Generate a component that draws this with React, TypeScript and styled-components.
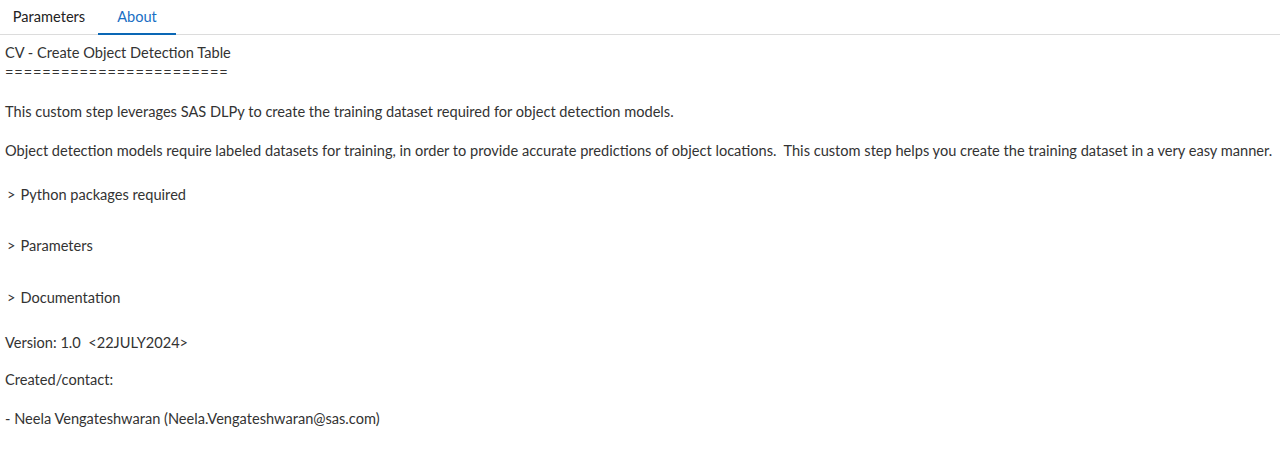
import React from "react";
import styled, { createGlobalStyle } from "styled-components";

const Global = createGlobalStyle`
  html, body { margin: 0; padding: 0; background: #fff; }
  body { font-family: Lato, "Open Sans", sans-serif; color: #333; }
`;

const Page = styled.div`
  width: 1280px;
  height: 460px;
  overflow: hidden;
`;

const TabBar = styled.div`
  display: flex;
  height: 34px;
  border-bottom: 1px solid #dcdcdc;
`;

const Tab = styled.div<{ $active?: boolean; $w: number }>`
  display: flex;
  align-items: center;
  justify-content: center;
  width: ${(p) => p.$w}px;
  padding-bottom: 3px;
  box-sizing: border-box;
  font-size: 14.6px;
  color: ${(p) => (p.$active ? "#1a6fc4" : "#222")};
  box-shadow: ${(p) => (p.$active ? "inset 0 -2px 0 #0a67b5" : "none")};
  margin-bottom: -1px;
`;

const Content = styled.div`
  padding: 8px 5px 0;
  font-size: 14.6px;
  line-height: 20px;
  color: #333;
`;

const Para = styled.p<{ $mt: number }>`
  margin: ${(p) => p.$mt}px 0 0;
  white-space: pre;
`;

const Rule = styled.span`
  letter-spacing: 0.85px;
`;

const Summary = styled.div<{ $mt: number }>`
  margin-top: ${(p) => p.$mt}px;
  display: flex;
  align-items: center;
  gap: 5px;
  padding-left: 2px;
`;

const Caret = styled.span`
  font-size: 14.6px;
`;

export default function App() {
  return (
    <Page>
      <Global />
      <TabBar>
        <Tab $w={98}>Parameters</Tab>
        <Tab $active $w={78}>About</Tab>
      </TabBar>
      <Content>
        <Para $mt={0}>CV - Create Object Detection Table{"\n"}<Rule>========================</Rule></Para>
        <Para $mt={19}>This custom step leverages SAS DLPy to create the training dataset required for object detection models.</Para>
        <Para $mt={19}>Object detection models require labeled datasets for training, in order to provide accurate predictions of object locations.  This custom step helps you create the training dataset in a very easy manner.</Para>
        <Summary $mt={24}><Caret>&gt;</Caret>Python packages required</Summary>
        <Summary $mt={31}><Caret>&gt;</Caret>Parameters</Summary>
        <Summary $mt={32}><Caret>&gt;</Caret>Documentation</Summary>
        <Para $mt={25}>Version: 1.0  &lt;22JULY2024&gt;</Para>
        <Para $mt={17}>Created/contact:</Para>
        <Para $mt={19}>- Neela Vengateshwaran (Neela.Vengateshwaran@sas.com)</Para>
      </Content>
    </Page>
  );
}
